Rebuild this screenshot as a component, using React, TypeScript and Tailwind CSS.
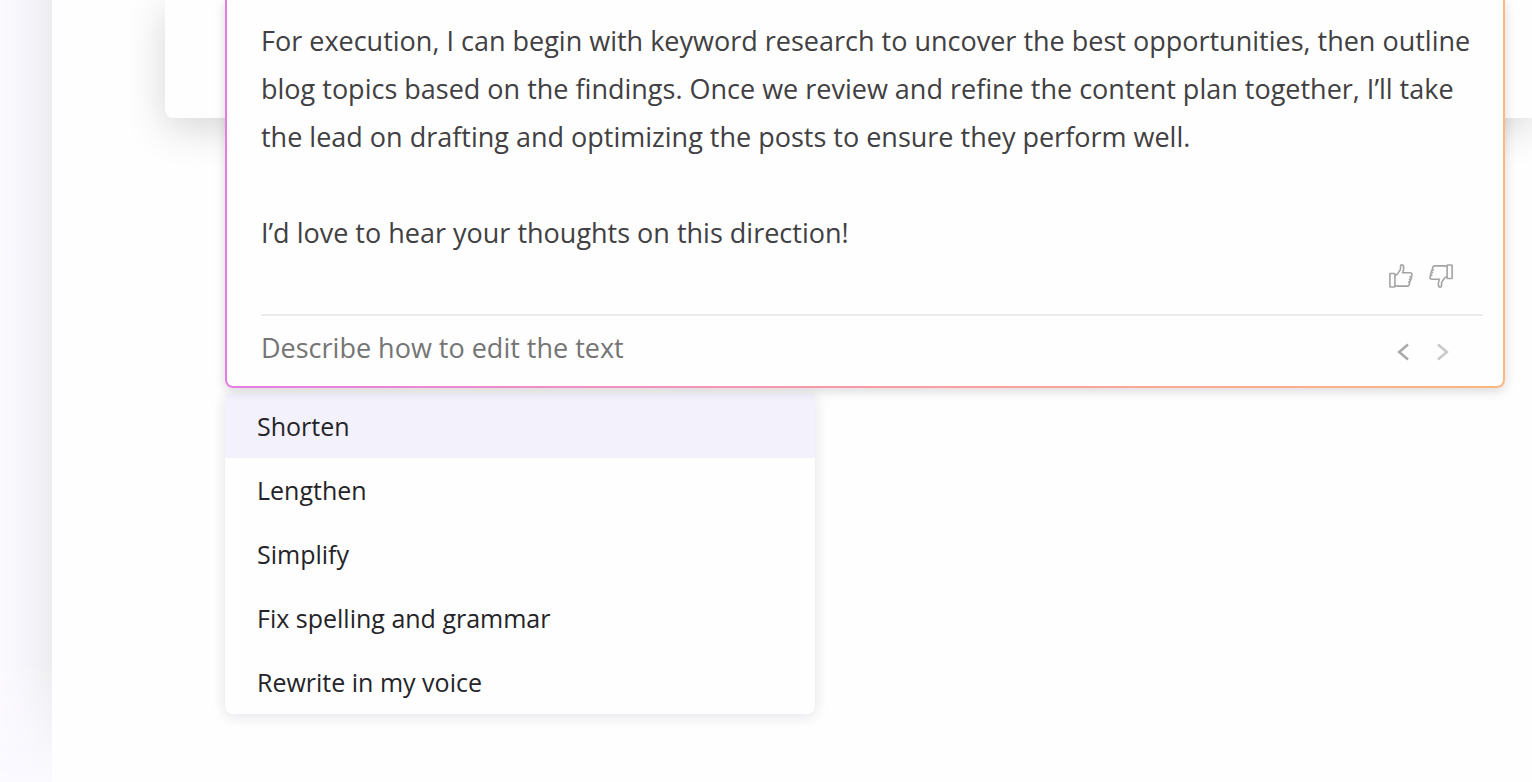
import { useState } from "react";

const PARAGRAPHS = [
  "For execution, I can begin with keyword research to uncover the best opportunities, then outline blog topics based on the findings. Once we review and refine the content plan together, I’ll take the lead on drafting and optimizing the posts to ensure they perform well.",
  "I’d love to hear your thoughts on this direction!",
];

const ACTIONS = [
  "Shorten",
  "Lengthen",
  "Simplify",
  "Fix spelling and grammar",
  "Rewrite in my voice",
];

function ThumbIcon({ down = false }: { down?: boolean }) {
  return (
    <svg
      viewBox="0 0 24 24"
      className={down ? "size-6 rotate-180" : "size-6"}
      fill="none"
      stroke="currentColor"
      strokeWidth="1.6"
      strokeLinecap="round"
      strokeLinejoin="round"
    >
      <rect x="0.9" y="9.500" width="5" height="13.500" rx="0.6" />
      <path d="M5.900 11.200c1.600 0 2.300-.6 3-1.900.7-1.400 2.600-2.800 2.600-4.500V2.200c0-.9.500-1.300 1.200-1.300 1.400 0 2 1.300 2 2.900 0 2-.6 3.300-1.100 5h7.200c1.400 0 2.300.9 2.300 1.900 0 1.100-.7 1.900-2 2.100h1.400c.1 1.500-.6 2.500-2 2.700h1.200c0 1.500-.7 2.400-1.900 2.600h.9c-.1 2.300-.9 4-2.500 4H9.200c-1.300 0-1.900-.4-3.300-.4" />
    </svg>
  );
}

function ChevronIcon({ flip = false }: { flip?: boolean }) {
  return (
    <svg
      viewBox="0 0 12 18"
      className={flip ? "h-[18px] w-3 rotate-180" : "h-[18px] w-3"}
      fill="none"
      stroke="currentColor"
      strokeWidth="2.600"
    >
      <path d="M11 1.500 2.200 9 11 16.500" />
    </svg>
  );
}

function Editor() {
  const [prompt, setPrompt] = useState("");

  return (
    <section className="relative z-10 rounded-b-lg bg-linear-to-r from-[#e57ce6] via-[#fb9aa6] to-[#ffb780] px-0.5 pb-0.5 shadow-[0_3px_12px_rgba(0,0,0,0.15)]">
      <div className="rounded-b-md bg-[#fefefe] pt-[17px] pr-5 pl-[34px]">
        <div className="space-y-12 pr-2 text-[27px] leading-[48px] text-[#414042]">
          {PARAGRAPHS.map((p) => (
            <p key={p}>{p}</p>
          ))}
        </div>
        <div className="flex justify-end gap-4 border-b-2 border-[#ebebec] pt-[7px] pr-[30px] pb-[26px] text-[#a4a4a4]">
          <button type="button" aria-label="Good suggestion">
            <ThumbIcon />
          </button>
          <button type="button" aria-label="Bad suggestion">
            <ThumbIcon down />
          </button>
        </div>
        <div className="flex h-[70px] items-start pr-[34px]">
          <input
            type="text"
            aria-label="Describe how to edit the text"
            placeholder="Describe how to edit the text"
            value={prompt}
            onChange={(e) => setPrompt(e.target.value)}
            className="h-[62px] min-w-0 flex-1 text-[27px] text-[#414042] outline-none placeholder:text-[#757575]"
          />
          <div className="flex gap-7 pt-[27px]">
            <button type="button" aria-label="Previous version" className="text-[#a9a9a9]">
              <ChevronIcon />
            </button>
            <button type="button" aria-label="Next version" className="text-[#c9c8ca]">
              <ChevronIcon flip />
            </button>
          </div>
        </div>
      </div>
    </section>
  );
}

function ActionMenu() {
  const [active, setActive] = useState(0);

  return (
    <ul className="mt-1.5 w-full max-w-[590px] overflow-hidden rounded-b-lg bg-[#fefefe] shadow-[0_2px_14px_rgba(30,20,50,0.12)]">
      {ACTIONS.map((label, i) => (
        <li key={label}>
          <button
            type="button"
            onMouseEnter={() => setActive(i)}
            className={`block h-16 w-full px-8 pt-0.5 text-left text-[25px] text-[#242428] ${
              i === active ? "bg-[#f3f1fc]" : ""
            }`}
          >
            {label}
          </button>
        </li>
      ))}
    </ul>
  );
}

export default function App() {
  return (
    <div className="flex min-h-screen overflow-hidden bg-[#fbfaff] font-['Open_Sans',sans-serif]">
      <div className="w-[52px] shrink-0 bg-linear-to-r from-[#fbfaff] via-[#f6f5fb] to-[#ededf0] [mask-image:linear-gradient(to_top,transparent,black_120px)]" />
      <main className="relative min-w-0 flex-1 bg-[#fefefe] pr-[27px] pb-[68px] pl-[173px]">
        <div className="absolute top-0 right-0 left-[113px] h-[118px] rounded-bl-lg bg-[#fefefe] shadow-[0_10px_40px_rgba(0,0,0,0.16)]" />
        <Editor />
        <ActionMenu />
      </main>
    </div>
  );
}
